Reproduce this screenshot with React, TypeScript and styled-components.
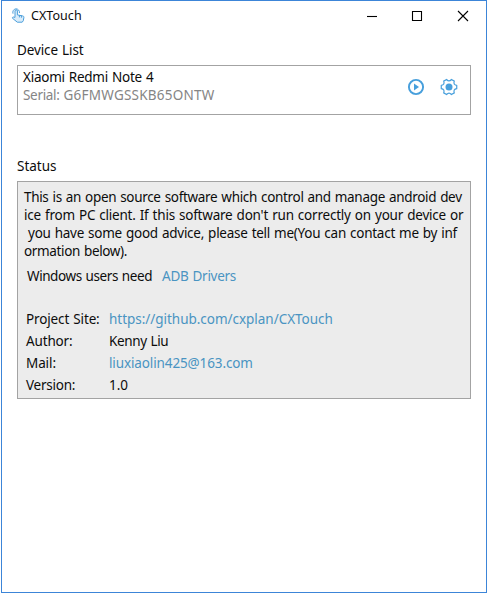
import React from 'react';
import styled, { createGlobalStyle } from 'styled-components';

const GlobalStyle = createGlobalStyle`
  *, *::before, *::after { box-sizing: border-box; }
  body { margin: 0; background: #fff; }
`;

const Window = styled.div`
  width: 486px;
  height: 593px;
  margin-left: 1px;
  border: 1px solid #3c85d8;
  background: #fff;
  color: #0c0c0c;
  font-family: 'Noto Sans', 'Open Sans', sans-serif;
  font-size: 13.5px;
  line-height: 18px;
  word-spacing: 0.8px;
`;

const TitleBar = styled.header`
  display: flex;
  align-items: center;
  height: 30px;
  padding-left: 8px;
`;

const AppTitle = styled.h1`
  flex: 1;
  margin: 0 0 0 5px;
  font-size: 12.5px;
  font-weight: 400;
  line-height: 18px;
  letter-spacing: 0.05px;
`;

const WindowButton = styled.button`
  display: grid;
  place-items: center;
  width: 46px;
  height: 28px;
  padding: 0;
  border: 0;
  background: none;
  color: #000;
`;

const WindowButtons = styled.div`
  display: flex;
`;

const Content = styled.main`
  padding: 10px 15px 0;
`;

const Heading = styled.h2<{ $track?: number }>`
  margin: 0;
  font-size: inherit;
  font-weight: 400;
  letter-spacing: ${(p) => p.$track ?? 0}px;
`;

const DeviceBox = styled.section`
  display: flex;
  align-items: flex-start;
  width: 454px;
  height: 50px;
  margin: 6px 0 42px;
  padding: 2px 12px 0 5px;
  border: 1px solid #a3a3a3;
`;

const DeviceInfo = styled.div`
  flex: 1;
`;

const Line = styled.div<{ $track?: number }>`
  white-space: pre;
  letter-spacing: ${(p) => p.$track ?? 0}px;
`;

const SerialLine = styled.div`
  display: flex;
  gap: 4px;
  color: #858585;
`;

const DeviceActions = styled.div`
  display: flex;
  gap: 15px;
  padding-top: 10px;
`;

const IconButton = styled.button`
  display: block;
  width: 18px;
  height: 18px;
  padding: 0;
  border: 0;
  background: none;
  color: #479fdc;

  svg { display: block; }
`;

const StatusBox = styled.section`
  width: 454px;
  height: 218px;
  margin-top: 6px;
  padding: 6px 6px 0;
  border: 1px solid #a3a3a3;
  background: #ececec;
`;

const DriverNote = styled.div`
  display: flex;
  gap: 10px;
  margin: 7px 0 23px 3px;
`;

const Link = styled.a<{ $track?: number }>`
  color: #4a94c2;
  text-decoration: none;
  letter-spacing: ${(p) => p.$track ?? 0}px;
`;

const Details = styled.dl`
  display: grid;
  grid-template-columns: 83px 1fr;
  grid-auto-rows: 22px;
  margin: 0 0 0 2px;
  line-height: 22px;
`;

const Term = styled.dt<{ $track?: number }>`
  letter-spacing: ${(p) => p.$track ?? 0}px;
`;

const Value = styled.dd<{ $track?: number }>`
  margin: 0;
  letter-spacing: ${(p) => p.$track ?? 0}px;
`;

const TouchIcon = () => (
  <svg width="16" height="16" viewBox="0 0 16 16" fill="#d9ecfa" stroke="#4a9edb" strokeWidth="1" strokeLinejoin="round" strokeLinecap="round">
    <path d="M5 9V3a1.200 1.200 0 0 1 2.400 0v3.900l5.200 1c.9.2 1.400.7 1.300 1.500l-.6 3.300-1.100 1.500H7.300L2.500 10.300c-.5-.8.400-1.600 1.200-1.300z" />
    <path d="M2.900 5.300a3.400 3.400 0 1 1 6.600-.6M9.400 7.500v1.500M11.400 7.900v1.400" fill="none" />
  </svg>
);

const PlayIcon = () => (
  <svg width="18" height="18" viewBox="0 0 18 18">
    <circle cx="9" cy="9" r="7.100" fill="none" stroke="currentColor" strokeWidth="1.900" />
    <path d="M7 5.500 12 9l-5 3.500z" fill="currentColor" />
  </svg>
);

const polar = (radius: number, degrees: number) => {
  const a = (degrees * Math.PI) / 180;
  return `${(9 + radius * Math.cos(a)).toFixed(2)} ${(9 + radius * Math.sin(a)).toFixed(2)}`;
};

// Six teeth, joined by rounded notches.
const gearOutline =
  [0, 60, 120, 180, 240, 300]
    .map((t, i) => `${i ? 'L' : 'M'}${polar(7.9, t - 12)}L${polar(7.9, t + 12)}Q${polar(4.6, t + 30)} ${polar(7.9, t + 48)}`)
    .join('') + 'Z';

const GearIcon = () => (
  <svg width="18" height="18" viewBox="0 0 18 18">
    <path d={gearOutline} fill="none" stroke="currentColor" strokeWidth="1.200" strokeLinejoin="round" />
    <circle cx="9" cy="9" r="3.500" fill="currentColor" />
  </svg>
);

const WindowGlyph = ({ d }: { d: string }) => (
  <svg width="12" height="12" viewBox="0 0 12 12" fill="none" stroke="currentColor" strokeWidth="1.100">
    <path d={d} />
  </svg>
);

const description = [
  { text: 'This is an open source software which control and manage android dev', track: -0.32 },
  { text: "ice from PC client. If this software don't run correctly on your device or", track: -0.22 },
  { text: ' you have some good advice, please tell me(You can contact me by inf', track: -0.26 },
  { text: 'ormation below).', track: -0.35 },
];

export default function App() {
  return (
    <>
      <GlobalStyle />
      <Window>
        <TitleBar>
          <TouchIcon />
          <AppTitle>CXTouch</AppTitle>
          <WindowButtons>
            <WindowButton aria-label="Minimize"><WindowGlyph d="M2 6.500h10" /></WindowButton>
            <WindowButton aria-label="Maximize"><WindowGlyph d="M1.500 1.500h9v9h-9z" /></WindowButton>
            <WindowButton aria-label="Close"><WindowGlyph d="M1 1l10 10M11 1L1 11" /></WindowButton>
          </WindowButtons>
        </TitleBar>
        <Content>
          <Heading $track={-0.12}>Device List</Heading>
          <DeviceBox>
            <DeviceInfo>
              <Line $track={-0.25}>Xiaomi Redmi Note 4</Line>
              <SerialLine>
                <Line $track={-0.32}>Serial:</Line>
                <Line $track={0.23}>G6FMWGSSKB65ONTW</Line>
              </SerialLine>
            </DeviceInfo>
            <DeviceActions>
              <IconButton aria-label="Start"><PlayIcon /></IconButton>
              <IconButton aria-label="Settings"><GearIcon /></IconButton>
            </DeviceActions>
          </DeviceBox>
          <Heading>Status</Heading>
          <StatusBox>
            {description.map((line) => (
              <Line key={line.text} $track={line.track}>{line.text}</Line>
            ))}
            <DriverNote>
              <Line $track={-0.42}>Windows users need</Line>
              <Link $track={-0.28}>ADB Drivers</Link>
            </DriverNote>
            <Details>
              <Term $track={-0.14}>Project Site:</Term>
              <Value><Link $track={-0.03}>https://github.com/cxplan/CXTouch</Link></Value>
              <Term $track={-0.15}>Author:</Term>
              <Value $track={-0.38}>Kenny Liu</Value>
              <Term $track={-0.1}>Mail:</Term>
              <Value><Link $track={-0.12}>liuxiaolin425@163.com</Link></Value>
              <Term $track={-0.24}>Version:</Term>
              <Value>1.0</Value>
            </Details>
          </StatusBox>
        </Content>
      </Window>
    </>
  );
}
